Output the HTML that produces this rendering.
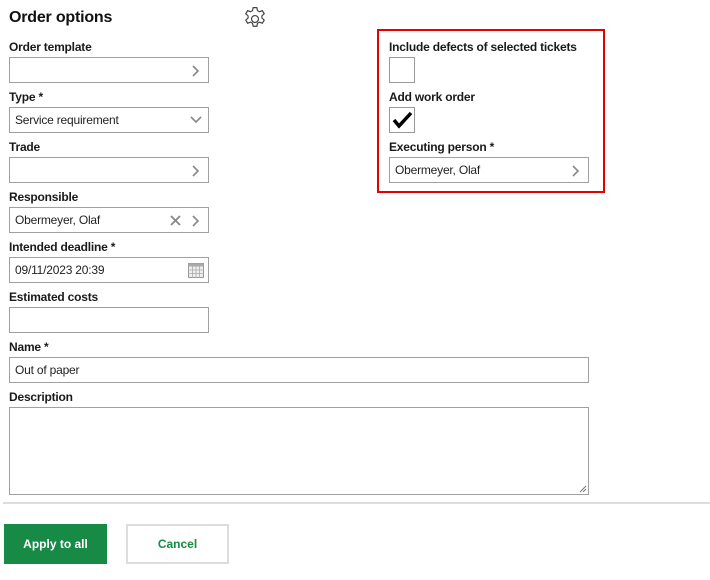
<!DOCTYPE html>
<html><head><meta charset="utf-8"><style>
*{box-sizing:border-box;margin:0;padding:0}
body{width:710px;height:580px;background:#fff;font-family:"Liberation Sans",sans-serif;color:#111;position:relative;overflow:hidden}
.a{position:absolute}
.lbl{position:absolute;font-size:12px;font-weight:bold;color:#1a1a1a;letter-spacing:-0.2px}
.box{position:absolute;border:1px solid #a0a0a0;background:#fff;height:26px;font-size:12px;line-height:25px;padding-left:5px;color:#222;letter-spacing:-0.2px}
.chev{position:absolute;right:8px;top:7px}
</style></head><body>
<div class="a" style="left:9px;top:9px;font-size:16px;font-weight:bold;letter-spacing:-0.2px">Order options</div>
<svg class="a" style="left:242px;top:6px" width="26" height="26" viewBox="0 0 24 24" fill="none" stroke="#444" stroke-width="1.1"><path d="M10.3 1.5h3.4l.6 2.8 1.8 1 2.7-1 1.7 2.9-2.1 1.9v2l2.1 1.9-1.7 2.9-2.7-1-1.8 1-.6 2.8h-3.4l-.6-2.8-1.8-1-2.7 1-1.7-2.9 2.1-1.9v-2l-2.1-1.9 1.7-2.9 2.7 1 1.8-1z"/><circle cx="12" cy="12" r="3.2"/></svg>

<div class="lbl" style="left:9px;top:40px">Order template</div>
<div class="box" style="left:9px;top:57px;width:200px"><svg class="chev" width="8" height="12"><path d="M1 1l5 5-5 5" stroke="#888" stroke-width="1.6" fill="none"/></svg></div>
<div class="lbl" style="left:9px;top:90px">Type *</div>
<div class="box" style="left:9px;top:107px;width:200px">Service requirement<svg class="chev" style="right:6px;top:8px" width="12" height="8"><path d="M1 1l5 5 5-5" stroke="#888" stroke-width="1.6" fill="none"/></svg></div>
<div class="lbl" style="left:9px;top:140px">Trade</div>
<div class="box" style="left:9px;top:157px;width:200px"><svg class="chev" width="8" height="12"><path d="M1 1l5 5-5 5" stroke="#888" stroke-width="1.6" fill="none"/></svg></div>
<div class="lbl" style="left:9px;top:190px">Responsible</div>
<div class="box" style="left:9px;top:207px;width:200px">Obermeyer, Olaf<svg class="a" style="right:27px;top:7px" width="11" height="11"><path d="M1 1l9 9M10 1l-9 9" stroke="#888" stroke-width="1.8"/></svg><svg class="chev" width="8" height="12"><path d="M1 1l5 5-5 5" stroke="#888" stroke-width="1.6" fill="none"/></svg></div>
<div class="lbl" style="left:9px;top:240px">Intended deadline *</div>
<div class="box" style="left:9px;top:257px;width:200px">09/11/2023 20:39<svg class="a" style="right:4px;top:3px" width="16" height="17"><rect x="0.5" y="2.5" width="15" height="14" fill="#eee" stroke="#999"/><rect x="0.5" y="2.5" width="15" height="3" fill="#aaa"/><path d="M0 9h16M0 12.5h16M4.5 5v12M8 5v12M11.5 5v12" stroke="#aaa" stroke-width="0.8"/></svg></div>
<div class="lbl" style="left:9px;top:290px">Estimated costs</div>
<div class="box" style="left:9px;top:307px;width:200px"></div>
<div class="lbl" style="left:9px;top:340px">Name *</div>
<div class="box" style="left:9px;top:357px;width:580px">Out of paper</div>
<div class="lbl" style="left:9px;top:390px">Description</div>
<div class="box" style="left:9px;top:407px;width:580px;height:88px"><svg class="a" style="right:1px;bottom:1px" width="8" height="8"><path d="M7 1L1 7M7 4L4 7" stroke="#777"/></svg></div>

<div class="a" style="left:377px;top:29px;width:228px;height:164px;border:2px solid #e60000"></div>
<div class="lbl" style="left:389px;top:40px">Include defects of selected tickets</div>
<div class="a" style="left:389px;top:57px;width:26px;height:26px;border:1px solid #999"></div>
<div class="lbl" style="left:389px;top:90px">Add work order</div>
<div class="a" style="left:389px;top:107px;width:26px;height:26px;border:1px solid #999"><svg class="a" style="left:2px;top:3px" width="21" height="18"><path d="M2 9l5 6L19 2" stroke="#000" stroke-width="3.5" fill="none"/></svg></div>
<div class="lbl" style="left:389px;top:140px">Executing person *</div>
<div class="box" style="left:389px;top:157px;width:200px">Obermeyer, Olaf<svg class="chev" width="8" height="12"><path d="M1 1l5 5-5 5" stroke="#888" stroke-width="1.6" fill="none"/></svg></div>

<div class="a" style="left:3px;top:502px;width:707px;height:2px;background:#ddd"></div>
<div class="a" style="left:4px;top:524px;width:103px;height:40px;background:#178a45;color:#fff;font-size:12px;font-weight:bold;text-align:center;line-height:40px">Apply to all</div>
<div class="a" style="left:126px;top:524px;width:103px;height:40px;border:2px solid #ddd;color:#178a45;font-size:12px;font-weight:bold;text-align:center;line-height:36px">Cancel</div>
</body></html>
